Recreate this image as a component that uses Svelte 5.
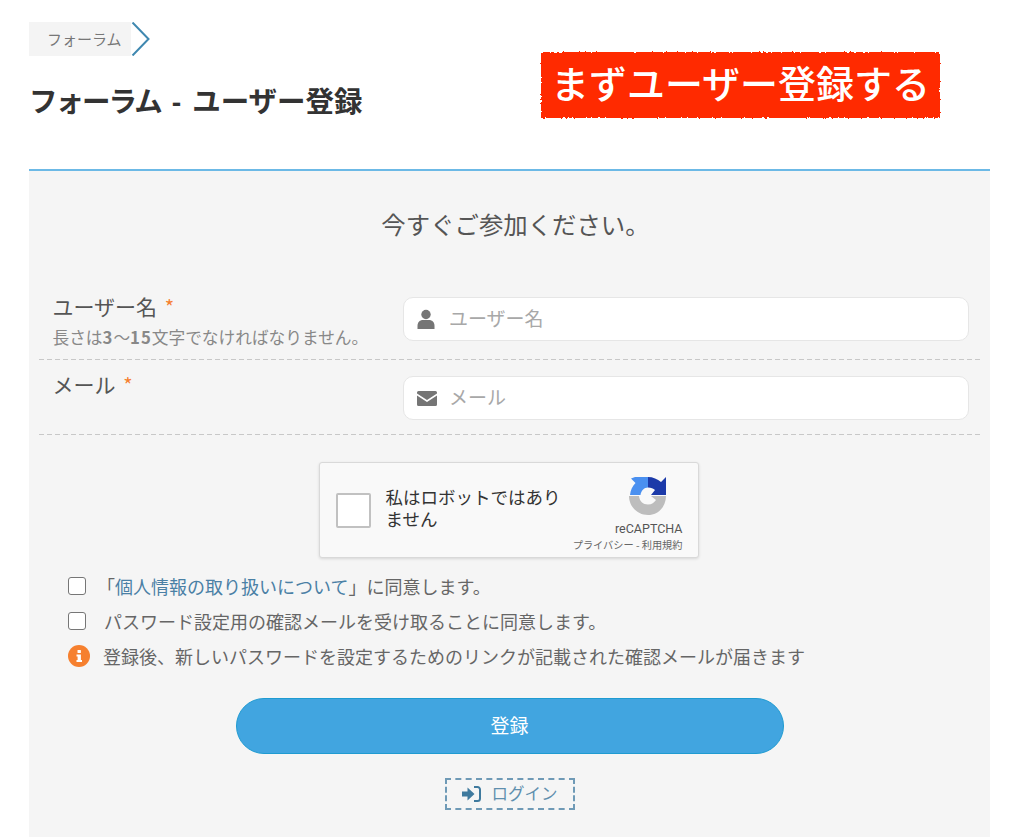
<script>
  const fields = [
    { label: 'ユーザー名', hint: true, placeholder: 'ユーザー名', icon: 'user' },
    { label: 'メール', hint: false, placeholder: 'メール', icon: 'mail' }
  ];
</script>

<svg class="defs" width="0" height="0" aria-hidden="true">
  <filter id="rough" x="-2%" y="-10%" width="104%" height="120%">
    <feTurbulence type="fractalNoise" baseFrequency="0.45" numOctaves="2" seed="4" result="n" />
    <feDisplacementMap in="SourceGraphic" in2="n" scale="3" />
  </filter>
</svg>

<div class="page">
  <div class="top">
    <nav class="crumbs">
      <span class="crumb">フォーラム</span>
      <svg class="chev" width="20" height="34" viewBox="0 0 20 34"><path d="M1.500 0.500 L17.500 17 L1.500 33.500" fill="none" stroke="#3f88b0" stroke-width="2" /></svg>
    </nav>
    <h1><span class="tight">フォーラム</span><span class="sep">-</span>ユーザー登録</h1>
    <div class="banner"><div class="banner-bg"></div><span>まずユーザー登録する</span></div>
  </div>

  <main class="panel">
    <h2>今すぐご参加ください。</h2>

    <div class="rows">
      {#each fields as f}
        <div class="row" class:first={f.hint}>
          <div class="lab">
            <div class="name">{f.label} <em>*</em></div>
            {#if f.hint}<div class="hint">長さは<b>3</b>〜<b>15</b>文字でなければなりません。</div>{/if}
          </div>
          <div class="input">
            {#if f.icon === 'user'}
              <svg width="18" height="20" viewBox="0 0 18 20"><circle cx="9" cy="5.500" r="4.700" fill="#757575" /><path d="M0.500 20v-3c0-4 2.500-6 5.500-6h6c3 0 5.500 2 5.500 6v3z" fill="#757575" /></svg>
            {:else}
              <svg width="20" height="15" viewBox="0 0 20 15"><path d="M1.500 0h17A1.500 1.500 0 0 1 20 1.500v1L10 9 0 2.500v-1A1.500 1.500 0 0 1 1.500 0z" fill="#757575" /><path d="M0 4.500l10 6.500 10-6.500v9A1.500 1.500 0 0 1 18.500 15h-17A1.500 1.500 0 0 1 0 13.500z" fill="#757575" /></svg>
            {/if}
            <span>{f.placeholder}</span>
          </div>
        </div>
      {/each}
    </div>

    <div class="captcha">
      <div class="box"></div>
      <div class="robot">私はロボットではありません</div>
      <div class="brand">
        <svg width="38" height="38" viewBox="0 0 38 38">
          <path d="M5 0 H18 V10.500 C14 10.500 11 14 10.500 18 H0 C0.500 13 2.500 9 5.500 6 L1 1.500 Z" fill="#4a90f0" transform="translate(1 0)" />
          <path d="M19 0 C24 0 28.500 2 32 5 L37 0 V18 H22 L26 13 C24.500 11.500 22 10.500 19 10.500 Z" fill="#1c3aa9" />
          <path d="M0 19 H10 C10.500 24 14 27.500 19 27.500 C23 27.500 25 25.500 27 23 L22 19 H37 C37 30 29 38 19 38 C8 38 0 29 0 19 Z" fill="#bdbdbd" />
        </svg>
        <div class="rc">reCAPTCHA</div>
        <div class="terms">プライバシー - 利用規約</div>
      </div>
    </div>

    <div class="checks">
      <div class="check"><i></i><span class="q">「<a href="#top">個人情報の取り扱いについて</a>」に同意します。</span></div>
      <div class="check"><i></i><span>パスワード設定用の確認メールを受け取ることに同意します。</span></div>
      <div class="check info">
        <svg width="22" height="22" viewBox="0 0 22 22"><circle cx="11" cy="11" r="11" fill="#f6802f" /><rect x="9.500" y="5" width="3.400" height="3" rx="0.500" fill="#fff" /><path d="M8.500 9.500h4.400v5.500h1.100v2H8.500v-2h1.100v-3.500H8.500z" fill="#fff" /></svg>
        <span>登録後、新しいパスワードを設定するためのリンクが記載された確認メールが届きます</span>
      </div>
    </div>

    <button class="submit" type="button">登録</button>

    <a class="login" href="#top">
      <svg width="19" height="16" viewBox="0 0 19 16"><path d="M0 5.500h5.500V1.500L12.500 8l-7 6.500v-4H0z" fill="#3f7a9e" /><path d="M12 1h3.500A2.500 2.500 0 0 1 18 3.500v9a2.500 2.500 0 0 1-2.500 2.500H12" fill="none" stroke="#3f7a9e" stroke-width="2" /></svg>
      <span>ログイン</span>
    </a>
  </main>
</div>

<style>
  :global(body) {
    margin: 0;
    background: #fff;
    font-family: "Noto Sans CJK JP", "Noto Sans", sans-serif;
  }
  .defs { position: absolute; }
  .page {
    height: 837px;
    padding: 22px 34px 0 29px;
    box-sizing: border-box;
    overflow: hidden;
    display: flex;
    flex-direction: column;
  }
  .top { position: relative; height: 147px; }
  .crumbs { display: flex; height: 34px; }
  .crumb {
    width: 102px;
    padding-left: 18px;
    box-sizing: border-box;
    background: #f4f4f4;
    color: #777;
    font-size: 15px;
    line-height: 34px;
  }
  h1 {
    margin: 23px 0 0;
    font-size: 28.500px;
    line-height: 42px;
    font-weight: 700;
    color: #333;
    white-space: nowrap;
  }
  .tight { letter-spacing: -2px; }
  .sep { margin: 0 11px; font-family: "Liberation Sans", sans-serif; }
  .banner {
    position: absolute;
    left: 512px;
    top: 30px;
    width: 399px;
    height: 66px;
    display: flex;
    align-items: center;
    justify-content: center;
  }
  .banner-bg {
    position: absolute;
    inset: 0;
    background: #ff2a00;
    filter: url(#rough);
  }
  .banner span {
    position: relative;
    top: -4px;
    color: #fff;
    font-size: 38px;
    font-weight: 500;
    white-space: nowrap;
  }
  .panel {
    flex: 1;
    background: #f5f5f5;
    border-top: 2px solid #6cb9e6;
    display: flex;
    flex-direction: column;
    align-items: center;
  }
  h2 {
    margin: 33px 0 0 12px;
    font-size: 24.400px;
    line-height: 40px;
    font-weight: 400;
    color: #555;
  }
  .rows {
    align-self: stretch;
    margin: 0 10px;
    padding-top: 36px;
  }
  .row {
    display: flex;
    justify-content: space-between;
    padding: 16px 11px 0 13.500px;
    height: 75px;
    box-sizing: border-box;
    background: repeating-linear-gradient(90deg, #c8c8c8 0 5px, transparent 5px 8px) bottom / 100% 1px no-repeat;
  }
  .row.first { height: 80px; padding-top: 17px; }
  .name {
    font-size: 21px;
    line-height: 30px;
    color: #555;
    margin-top: -7px;
  }
  .first .name { margin-top: -6px; }
  .name em { color: #f6802f; font-style: normal; font-size: 20px; margin-left: 3px; }
  .hint { font-size: 16.700px; line-height: 24px; color: #888; margin-top: 3px; white-space: nowrap; }
  .hint b { font-weight: 700; letter-spacing: 1px; }
  .input {
    width: 566px;
    height: 44px;
    box-sizing: border-box;
    background: #fff;
    border: 1px solid #e6e6e6;
    border-radius: 10px;
    padding-left: 13px;
    display: flex;
    align-items: center;
    color: #a8a8a8;
    font-size: 19px;
  }
  .input svg { flex: none; }
  .input span { position: absolute; margin: -3px 0 0 32px; }
  .captcha {
    margin-top: 27px;
    margin-right: 2px;
    width: 380px;
    height: 96px;
    box-sizing: border-box;
    background: #f9f9f9;
    border: 1px solid #d9d9d9;
    border-radius: 3px;
    box-shadow: 0 1px 3px rgba(0, 0, 0, 0.12);
    display: flex;
    align-items: center;
    padding-left: 16px;
  }
  .box {
    width: 35px;
    height: 35px;
    box-sizing: border-box;
    background: #fff;
    border: 2px solid #c1c1c1;
    border-radius: 2px;
    flex: none;
  }
  .robot {
    width: 180px;
    margin: -4px 0 0 15px;
    font-size: 17.500px;
    line-height: 22px;
    color: #333;
    font-weight: 400;
  }
  .brand {
    margin-left: auto;
    width: 130px;
    padding-right: 15px;
    box-sizing: border-box;
    display: flex;
    flex-direction: column;
    align-items: flex-end;
    align-self: flex-start;
    padding-top: 14px;
  }
  .brand svg { margin-right: 16px; }
  .rc {
    margin-top: 5px;
    font-family: "Roboto", sans-serif;
    font-size: 12.500px;
    line-height: 18px;
    color: #555;
  }
  .terms { font-size: 10.200px; line-height: 13px; color: #666; white-space: nowrap; }
  .checks {
    align-self: stretch;
    margin: 10px 0 0 39px;
    display: flex;
    flex-direction: column;
  }
  .check {
    display: flex;
    align-items: center;
    height: 35px;
    font-size: 18px;
    color: #666;
  }
  .check i {
    width: 18px;
    height: 18px;
    box-sizing: border-box;
    border: 1.500px solid #767676;
    border-radius: 3px;
    background: #fff;
    margin-right: 18px;
    flex: none;
  }
  .q { margin-left: -7px; }
  .q a { color: #4a80a5; text-decoration: none; }
  .info svg { margin-right: 13px; flex: none; }
  .submit {
    margin-top: 25px;
    width: 548px;
    height: 56px;
    flex: none;
    border-radius: 28px;
    border: 1px solid #1f9bd1;
    background: #41a5e0;
    color: #fff;
    font-family: inherit;
    font-size: 19px;
    padding: 0 0 3px;
  }
  .login {
    margin-top: 24px;
    width: 130px;
    height: 32px;
    flex: none;
    box-sizing: border-box;
    border: 2px dashed #6f9ab6;
    display: flex;
    align-items: center;
    justify-content: center;
    gap: 11px;
    color: #5f8fae;
    text-decoration: none;
    font-size: 16.500px;
  }
  .login span { margin-top: -2px; }
</style>
